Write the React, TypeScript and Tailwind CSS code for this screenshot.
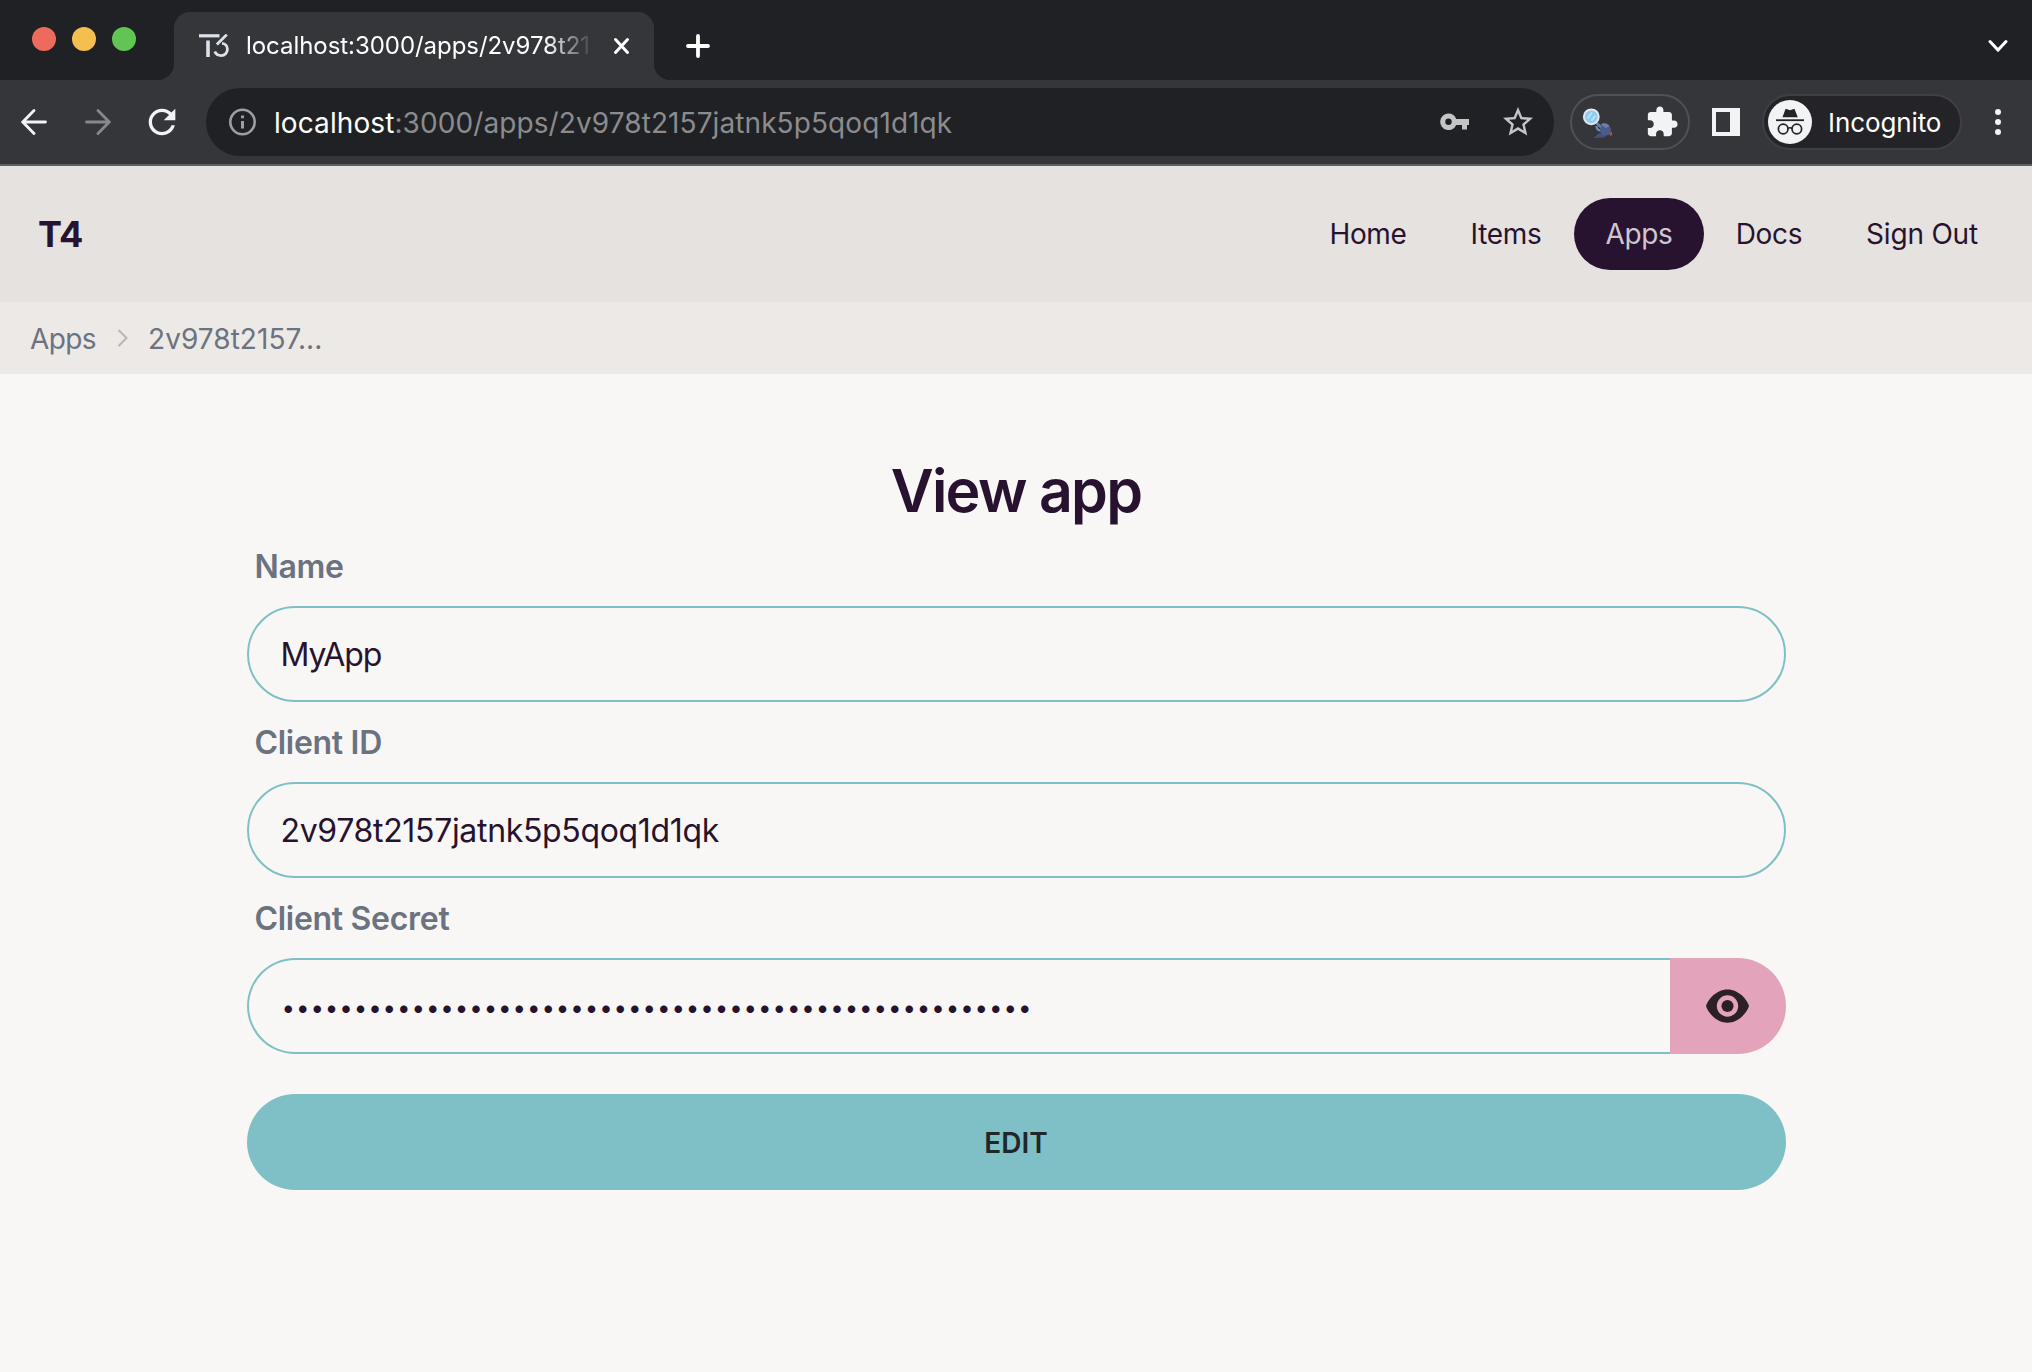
import React from "react";

const SANS = "font-['Inter','Liberation_Sans',sans-serif]";
const APP_ID = "2v978t2157jatnk5p5qoq1d1qk";

function T3Logo() {
  return (
    <svg width="30" height="24" viewBox="0 0 30 24" className="block shrink-0" fill="none" stroke="#dde1ea">
      <path d="M0 1.8H20.5" strokeWidth="3.2" />
      <path d="M9 6.500V23" strokeWidth="3.6" />
      <path d="M27.8 0.600L17.8 10.600" strokeWidth="2.8" />
      <path d="M23 9.400C26.300 9.600 28.400 12.200 28.400 15.200C28.400 18.700 25.800 21.600 22.200 21.600C19.200 21.600 16.800 20.200 15.800 17.600" strokeWidth="2.8" />
    </svg>
  );
}

function Arrow({ className }: { className: string }) {
  return (
    <svg width="26" height="26" viewBox="0 0 26 26" className={className} fill="none" stroke="currentColor" strokeWidth="2.8" strokeLinecap="round">
      <path d="M24.5 13H2M13 1.6L1.8 13L13 24.4" strokeLinejoin="miter" />
    </svg>
  );
}

function TabStrip() {
  return (
    <div className="flex h-20 bg-[#35363a]">
      <div className="flex w-[174px] items-start gap-4 rounded-br-2xl bg-[#202124] pt-[27px] pl-8">
        <span className="size-6 rounded-full bg-[#ed6a5e]" />
        <span className="size-6 rounded-full bg-[#f5bf4f]" />
        <span className="size-6 rounded-full bg-[#61c554]" />
      </div>
      <div className="w-[480px] bg-[#202124]">
        <div className="mt-3 flex h-[68px] items-center rounded-t-2xl bg-[#35363a] pl-[25px]">
          <T3Logo />
          <div className="ml-[17px] w-[345px] [mask-image:linear-gradient(to_right,black_300px,transparent_348px)]">
            <span className="text-[24px] leading-8 tracking-[-0.05px] whitespace-nowrap text-white">localhost:3000/apps/2v978t21</span>
          </div>
          <svg width="17" height="18" viewBox="0 0 17 18" className="ml-[22px] block" stroke="#fff" strokeWidth="3" strokeLinecap="round">
            <path d="M2.500 2.500L14.500 15.500M14.500 2.500L2.500 15.500" />
          </svg>
        </div>
      </div>
      <div className="flex flex-1 items-center justify-between rounded-bl-2xl bg-[#202124] pt-3 pr-[24px] pl-8">
        <svg width="24" height="24" viewBox="0 0 24 24" stroke="#fff" strokeWidth="3.8" strokeLinecap="round">
          <path d="M12 2V22M2 12H22" />
        </svg>
        <svg width="20" height="14" viewBox="0 0 20 14" fill="none" stroke="#fff" strokeWidth="3" strokeLinecap="round">
          <path d="M2 2.5L10 11L18 2.5" />
        </svg>
      </div>
    </div>
  );
}

function Detective() {
  return (
    <svg width="32" height="34" viewBox="0 0 32 34" className="block">
      <path d="M15 18.500L20 23" stroke="#6c7da8" strokeWidth="2.6" strokeLinecap="round" />
      <path d="M14.500 21C14.500 23.500 16 25.500 19 25.500" stroke="#7385b4" strokeWidth="2.2" fill="none" />
      <path d="M11.500 33L17.500 28L24 30.500L22 32.500Z" fill="#43537c" />
      <ellipse cx="23.500" cy="25" rx="5.500" ry="5.500" fill="#4a5c8a" />
      <path d="M19 19.800C21 17.500 25.500 18 27.500 21L24 23Z" fill="#6f80ab" />
      <path d="M27 28.500L29.800 26.500L30.300 30L28 31Z" fill="#b4532f" />
      <circle cx="9.300" cy="11.800" r="7.400" fill="#8ecbf0" stroke="#dfe8f2" strokeWidth="2" />
      <path d="M5.500 13.500L10 7.500M9.500 15.800L13.500 10.500" stroke="#b9e1f7" strokeWidth="2" />
    </svg>
  );
}

function Toolbar() {
  return (
    <div className="flex h-[86px] items-center border-b-2 border-[#5f6064] bg-[#35363a] pr-[24px] pl-[21px]">
      <Arrow className="block shrink-0 text-[#f1f3f4]" />
      <Arrow className="ml-[38px] block shrink-0 rotate-180 text-[#87888b]" />
      <svg width="40" height="40" viewBox="0 0 24 24" className="ml-[31px] block shrink-0" fill="#f1f3f4">
        <path d="M17.65 6.35C16.2 4.9 14.21 4 12 4c-4.42 0-7.99 3.58-7.99 8s3.57 8 7.99 8c3.73 0 6.84-2.55 7.73-6h-2.08c-.82 2.33-3.04 4-5.65 4-3.31 0-6-2.69-6-6s2.69-6 6-6c1.66 0 3.14.69 4.22 1.78L13 11h7V4l-2.35 2.35z" />
      </svg>
      <div className="ml-6 flex h-[68px] w-[1348px] shrink-0 items-center rounded-full bg-[#202124] pl-[22px]">
        <svg width="29" height="28" viewBox="0 0 28 28" className="block" fill="none" stroke="#9aa0a6">
          <circle cx="14" cy="14" r="12.2" strokeWidth="2.6" />
          <path d="M14 13V20.5M14 7.5V10.3" strokeWidth="3" />
        </svg>
        <p className="ml-[17px] w-[1166px] pt-px text-[28px] leading-9 tracking-[0.09px] whitespace-nowrap text-[#8b8c8f]">
          <span className="text-white">localhost</span>:3000/apps/{APP_ID}
        </p>
        <svg width="30" height="18" viewBox="0 0 30 18" className="block shrink-0" fill="#c4c5c7">
          <path fillRule="evenodd" d="M8.5 0.5A8.3 8.3 0 1 0 16.2 12H22V16.6H27V12H29V6H16.2A8.3 8.3 0 0 0 8.5 0.5ZM8.5 5.6A3.2 3.2 0 1 1 8.5 12A3.2 3.2 0 1 1 8.5 5.6Z" />
        </svg>
        <svg width="36" height="36" viewBox="0 0 24 24" className="ml-[30px] block shrink-0" fill="#c4c5c7">
          <path d="M22 9.24l-7.19-.62L12 2 9.19 8.63 2 9.24l5.46 4.73L5.82 21 12 17.27 18.18 21l-1.63-7.03L22 9.24zM12 15.4l-3.76 2.27 1-4.28-3.32-2.88 4.38-.38L12 6.1l1.71 4.04 4.38.38-3.32 2.88 1 4.28L12 15.4z" />
        </svg>
      </div>
      <div className="ml-4 flex h-14 w-[120px] shrink-0 items-center rounded-full border-2 border-[#505155] pl-2.5">
        <Detective />
        <svg width="34" height="34" viewBox="0 0 24 24" className="ml-[31px] block" fill="#f1f3f4">
          <path d="M20.5 11H19V7c0-1.1-.9-2-2-2h-4V3.500C13 2.120 11.880 1 10.500 1S8 2.120 8 3.500V5H4c-1.100 0-1.990.9-1.990 2v3.800H3.500c1.490 0 2.700 1.210 2.700 2.700s-1.210 2.700-2.700 2.700H2V20c0 1.100.9 2 2 2h3.800v-1.500c0-1.490 1.210-2.700 2.700-2.700 1.490 0 2.700 1.210 2.700 2.700V22H17c1.100 0 2-.9 2-2v-4h1.500c1.380 0 2.500-1.120 2.500-2.500S21.880 11 20.500 11z" />
        </svg>
      </div>
      <div className="ml-[22px] size-7 shrink-0 bg-[#f1f3f4] p-1">
        <div className="h-5 w-3.5 bg-[#35363a]" />
      </div>
      <div className="ml-[22px] flex h-14 w-[200px] shrink-0 items-center rounded-full border-2 border-[#3f4045] bg-[#232328] pl-1">
        <svg width="44" height="44" viewBox="0 0 44 44" className="block shrink-0">
          <circle cx="22" cy="22" r="22" fill="#f1f3f4" />
          <path d="M14.5 17.2L17.6 8.800L22 10.200L26.400 8.800L29.800 17.200Z" fill="#232328" />
          <path d="M8 20.200H36" stroke="#232328" strokeWidth="1.800" />
          <g fill="none" stroke="#232328" strokeWidth="1.700">
            <circle cx="15.200" cy="29" r="4.800" />
            <circle cx="28.800" cy="29" r="4.800" />
            <path d="M19.800 28.500Q22 27 24.200 28.500" />
          </g>
        </svg>
        <span className="ml-4 pt-0.5 text-[26px] leading-8 tracking-[-0.1px] text-white">Incognito</span>
      </div>
      <div className="ml-auto flex w-5 shrink-0 flex-col items-center gap-1">
        <span className="size-1.5 rounded-full bg-[#f1f3f4]" />
        <span className="size-1.5 rounded-full bg-[#f1f3f4]" />
        <span className="size-1.5 rounded-full bg-[#f1f3f4]" />
      </div>
    </div>
  );
}

function NavBar() {
  return (
    <nav className="flex h-[136px] items-center justify-between bg-[#e5e2df] pr-[22px] pl-[38px] text-[#27132f]">
      <a className="text-[36px] leading-[44px] font-bold tracking-[-0.6px]">T4</a>
      <ul className="flex text-[28px] leading-10 tracking-[-0.3px]">
        <li className="flex h-[72px] w-[140px] items-center justify-center">Home</li>
        <li className="flex h-[72px] w-[136px] items-center justify-center">Items</li>
        <li className="flex h-[72px] w-[130px] items-center justify-center rounded-full bg-[#27132f] text-[#cfc7cf]">Apps</li>
        <li className="flex h-[72px] w-[130px] items-center justify-center">Docs</li>
        <li className="flex h-[72px] w-[176px] items-center justify-center tracking-[-0.2px]">Sign Out</li>
      </ul>
    </nav>
  );
}

function Breadcrumbs() {
  return (
    <div className="flex h-[72px] items-center bg-[#ede9e6] pl-[30px] text-[28px] leading-10 text-[#6b7280]">
      <span className="w-[87px] pt-px tracking-[-0.6px]">Apps</span>
      <svg width="12" height="18" viewBox="0 0 12 18" className="block" fill="none" stroke="#b7b5b6" strokeWidth="2">
        <path d="M1.500 1L9.500 9L1.500 17" />
      </svg>
      <span className="ml-[19px] pt-px tracking-[0.05px]">2v978t2157...</span>
    </div>
  );
}

function Label({ children }: { children: React.ReactNode }) {
  return <label className="flex h-20 items-center pt-0.5 pl-2 text-[32px] leading-10 font-semibold tracking-[-0.3px] text-[#6b7280]">{children}</label>;
}

function Field({ children, className }: { children: React.ReactNode; className: string }) {
  return <div className={`flex h-24 items-center rounded-full border-2 border-[#7ec0c6] pt-0.5 pl-8 text-[32px] leading-10 ${className}`}>{children}</div>;
}

export default function App() {
  return (
    <div className={`flex h-[1372px] w-[2032px] flex-col overflow-hidden bg-[#f8f7f5] ${SANS}`}>
      <TabStrip />
      <Toolbar />
      <NavBar />
      <Breadcrumbs />
      <main className="mx-auto w-[1539px] pt-[82px] text-[#27132f]">
        <h1 className="h-[70px] text-center text-[59px] leading-[70px] font-semibold tracking-[-1.700px]">View app</h1>
        <Label>Name</Label>
        <Field className="tracking-[-1.100px]">MyApp</Field>
        <Label>Client ID</Label>
        <Field className="tracking-[-0.330px]">{APP_ID}</Field>
        <Label>Client Secret</Label>
        <div className="flex h-24">
          <div className="flex flex-1 items-center rounded-l-full border-2 border-r-0 border-[#7ec0c6] pt-[3px] pl-[33px]">
            <span className="text-[24px] leading-8 tracking-[0.940px]">{"•".repeat(52)}</span>
          </div>
          <button className="flex w-[116px] items-center justify-center rounded-r-full bg-[#e3a3bb]">
            <svg width="43" height="38" viewBox="0 0 576 512" className="block" fill="#2c2027">
              <path fillRule="evenodd" d="M288 32c-80.800 0-145.500 36.800-192.600 80.600C48.600 156 17.300 208 2.500 243.700c-3.300 7.900-3.300 16.700 0 24.600C17.300 304 48.600 356 95.400 399.400C142.500 443.200 207.200 480 288 480s145.500-36.800 192.600-80.600c46.800-43.500 78.100-95.400 93-131.100c3.300-7.900 3.300-16.700 0-24.600c-14.900-35.700-46.200-87.700-93-131.100C433.500 68.800 368.800 32 288 32zM144 256a144 144 0 1 1 288 0 144 144 0 1 1 -288 0z" />
              <circle cx="288" cy="256" r="82" />
            </svg>
          </button>
        </div>
        <button className="mt-10 flex h-24 w-full items-center justify-center rounded-full bg-[#7ec0c6] pt-px text-[28px] leading-8 font-semibold text-[#1f2728]">EDIT</button>
      </main>
    </div>
  );
}
